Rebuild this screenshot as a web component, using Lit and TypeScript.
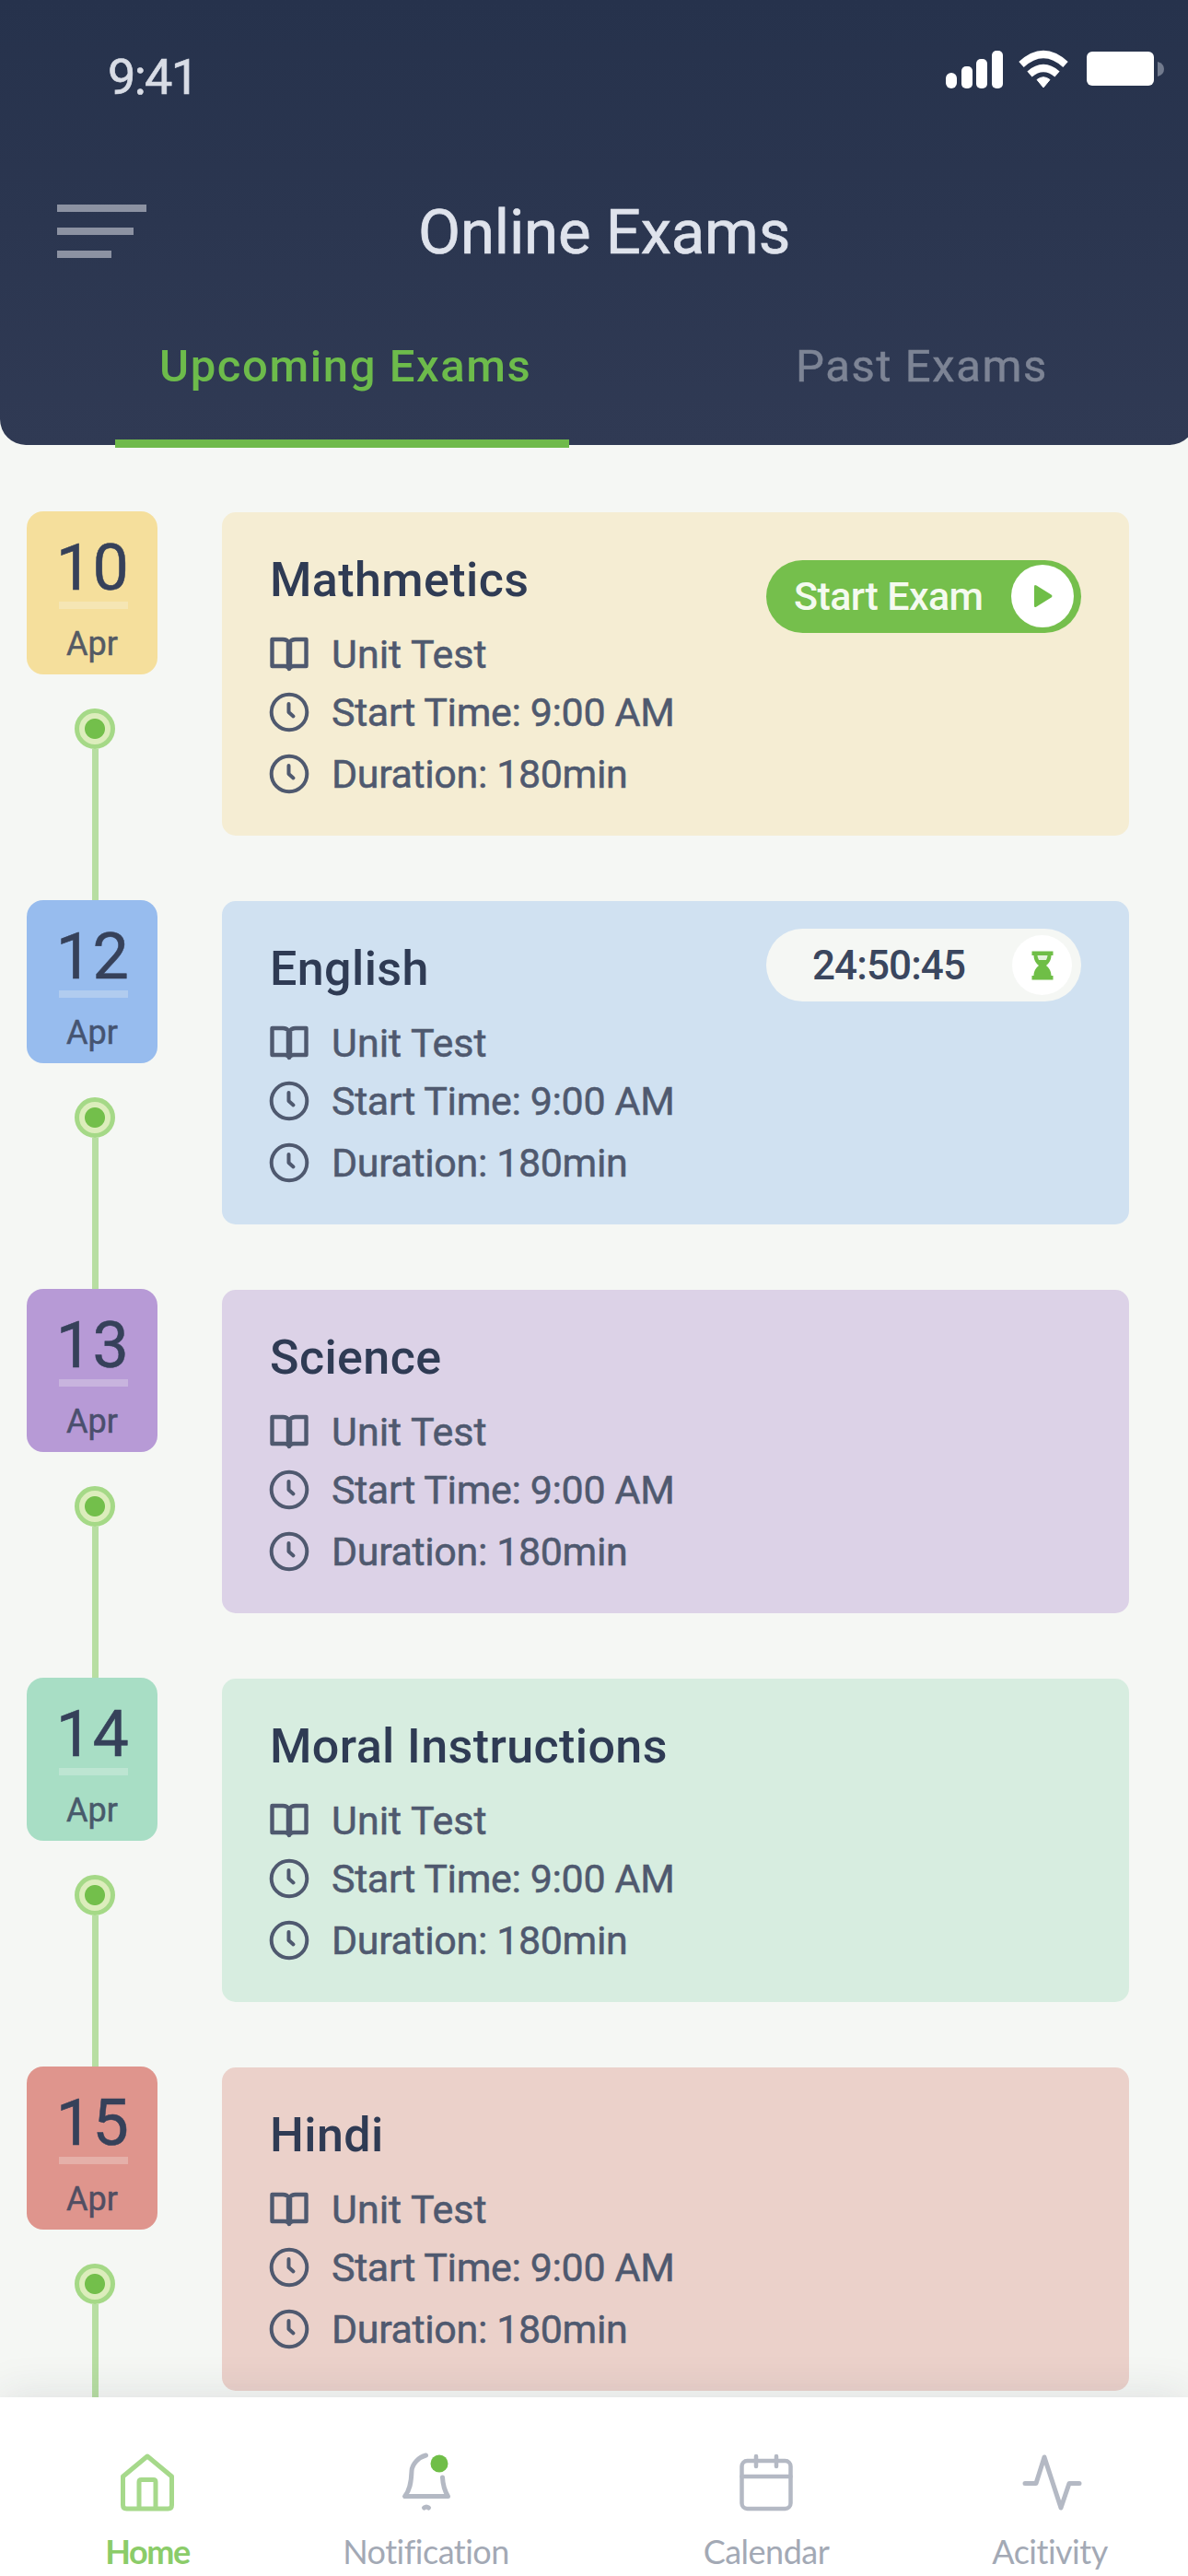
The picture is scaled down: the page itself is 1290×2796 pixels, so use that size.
import { LitElement, html, css, svg, nothing } from "lit";
import { customElement, property } from "lit/decorators.js";

type Action = "start" | "timer" | "none";

interface Exam {
  day: string;
  month: string;
  subject: string;
  tone: string;
  action: Action;
}

const EXAMS: Exam[] = [
  { day: "10", month: "Apr", subject: "Mathmetics", tone: "yellow", action: "start" },
  { day: "12", month: "Apr", subject: "English", tone: "blue", action: "timer" },
  { day: "13", month: "Apr", subject: "Science", tone: "purple", action: "none" },
  { day: "14", month: "Apr", subject: "Moral Instructions", tone: "green", action: "none" },
  { day: "15", month: "Apr", subject: "Hindi", tone: "red", action: "none" },
];

const bookIcon = html`<svg class="icon" width="44" height="40" viewBox="0 0 44 40" fill="none" stroke="currentColor" stroke-width="4.4" stroke-linejoin="round">
  ${svg`<path d="M22 8C20.500 5 18 4 15 4H3.500v29H17c2.600 0 4.300 .8 5 3c.7-2.200 2.400-3 5-3h13.500V4H29c-3 0-5.500 1-7 4z"/><path d="M22 8v28" stroke-width="6.500"/>`}
</svg>`;

const clockIcon = html`<svg class="icon" width="44" height="44" viewBox="0 0 44 44" fill="none" stroke="currentColor" stroke-width="4" stroke-linecap="round" stroke-linejoin="round">
  ${svg`<circle cx="22" cy="22" r="19.300"/><path d="M21.500 13V22l5 4.500"/>`}
</svg>`;

@customElement("exam-row")
class ExamRow extends LitElement {
  @property({ attribute: false }) exam!: Exam;

  static styles = css`
    :host { display: block; height: 422px; flex: none; }
    .row { display: grid; grid-template-columns: 142px 985px; column-gap: 70px; padding-left: 29px; height: 100%; }
    .rail { display: flex; flex-direction: column; align-items: center; }
    .badge { flex: none; width: 142px; height: 177px; margin-top: -1px; border-radius: 18px; display: flex; flex-direction: column; align-items: center; color: #36415a; }
    .day { font-size: 70px; line-height: 74px; letter-spacing: 0.500px; margin: 24px 0 0 1px; -webkit-text-stroke: 0.500px currentColor; }
    .rule { width: 75px; height: 8px; margin: 0 0 0 2px; background: rgba(245, 247, 244, 0.28); }
    .month { font-size: 36px; line-height: 42px; margin-top: 17px; opacity: 0.84; -webkit-text-stroke: 0.500px currentColor; }
    .dot { flex: none; box-sizing: border-box; width: 44px; height: 44px; margin: 37px 0 0 6px; border-radius: 50%; border: 5px solid #a5d987; background: radial-gradient(circle, #73bf4b 10.500px, #dcedbc 11.500px); }
    .line { flex: 1; width: 7px; margin-left: 6px; background: #b7dea2; }
    .card { height: 351px; border-radius: 15px; box-sizing: border-box; padding: 44px 52px 0; display: flex; justify-content: space-between; align-items: flex-start; color: #2f3b54; }
    .subject { font-size: 52px; line-height: 60px; font-weight: 500; margin-bottom: 18px; letter-spacing: 0.400px; white-space: nowrap; }
    .detail { display: flex; align-items: center; height: 63px; font-size: 43px; color: #4f596f; gap: 24px; white-space: nowrap; }
    .detail span { -webkit-text-stroke: 0.500px currentColor; }
    .detail.tight { letter-spacing: -0.370px; }
    .detail.last { height: 72px; }
    .icon { flex: none; display: block; margin-left: -1px; }
    .yellow .badge { background: #f5df9c; } .yellow .card { background: #f5edd3; }
    .blue .badge { background: #97bcee; } .blue .card { background: #d0e1f1; }
    .purple .badge { background: #b79ad6; } .purple .card { background: #dcd2e7; }
    .green .badge { background: #a8dec5; } .green .card { background: #d7ede0; }
    .red .badge { background: #df958d; } .red .card { background: #ebd1ca; }
    .pill { flex: none; box-sizing: border-box; width: 342px; height: 79px; border-radius: 40px; display: flex; align-items: center; justify-content: space-between; font-weight: 500; }
    .start { margin-top: 8px; background: #75bf4c; color: #f4faef; font-size: 43px; padding: 0 8px 1px 30px; letter-spacing: -0.600px; }
    .timer { margin-top: -14px; background: #f5f7f4; color: #3a465e; font-size: 44px; padding: 0 10px 0 50px; letter-spacing: -0.900px; }
    .knob { width: 68px; height: 68px; border-radius: 50%; background: #fff; display: grid; place-items: center; }
    .timer .knob { width: 65px; height: 65px; }
  `;

  private renderAction() {
    if (this.exam.action === "start") {
      return html`<div class="pill start"><span>Start Exam</span>
        <span class="knob"><svg width="24" height="26" viewBox="0 0 24 26" fill="#6fbe47">${svg`<path d="M3 2.500Q3 0 5.500 1.400L21.500 11.500Q23.500 13 21.500 14.500L5.500 24.600Q3 26 3 23.500Z"/>`}</svg></span></div>`;
    }
    if (this.exam.action === "timer") {
      return html`<div class="pill timer"><span>24:50:45</span>
        <span class="knob"><svg width="24" height="32" viewBox="0 0 24 32">${svg`<path fill="#6fbe47" d="M0.500 0.500h23v4.500h-2c0 5-2.500 8.500-5.500 11c3 2.500 5.500 6 5.500 11h2v4.500H0.500V27h2c0-5 2.500-8.500 5.500-11C5 13.500 2.500 10 2.500 5h-2z"/><path fill="#e4f3db" d="M6.500 5h11c-.2 2-.8 3.500-1.500 5H8c-.7-1.500-1.300-3-1.500-5z"/>`}</svg></span></div>`;
    }
    return nothing;
  }

  render() {
    const e = this.exam;
    return html`<div class="row ${e.tone}">
      <div class="rail">
        <div class="badge">
          <span class="day">${e.day}</span>
          <span class="rule"></span>
          <span class="month">${e.month}</span>
        </div>
        <span class="dot"></span>
        <span class="line"></span>
      </div>
      <div class="card">
        <div>
          <div class="subject">${e.subject}</div>
          <div class="detail">${bookIcon}<span>Unit Test</span></div>
          <div class="detail tight">${clockIcon}<span>Start Time: 9:00 AM</span></div>
          <div class="detail tight last">${clockIcon}<span>Duration: 180min</span></div>
        </div>
        ${this.renderAction()}
      </div>
    </div>`;
  }
}

@customElement("app-root")
class AppRoot extends LitElement {
  static styles = css`
    :host { display: block; font-family: Roboto, "Liberation Sans", sans-serif; }
    .screen { width: 1290px; height: 2796px; overflow: hidden; display: flex; flex-direction: column; background: #f5f7f4; }
    header { flex: none; height: 483px; box-sizing: border-box; margin-right: -8px; border-radius: 0 0 28px 28px; background: linear-gradient(#26324c, #303a54); display: flex; flex-direction: column; position: relative; z-index: 1; }
    .status { flex: none; display: flex; justify-content: space-between; align-items: flex-start; height: 150px; box-sizing: border-box; padding: 52px 29px 0 117px; }
    .time { font-size: 54px; line-height: 64px; letter-spacing: -1.700px; color: #d8dce5; -webkit-text-stroke: 0.700px currentColor; }
    .title-row { flex: none; display: flex; height: 196px; }
    .menu { flex: none; width: 98px; height: 58px; margin: 72px 0 0 62px; display: flex; flex-direction: column; justify-content: space-between; }
    .menu span { height: 8px; background: #8c92a2; }
    .menu .a { width: 97px; } .menu .b { width: 83px; } .menu .c { width: 59px; }
    h1 { margin: 62px 0 0 294px; font-weight: 400; font-size: 67px; line-height: 80px; letter-spacing: -0.150px; color: #dfe3ec; white-space: nowrap; -webkit-text-stroke: 0.700px currentColor; }
    .tabs { flex: none; display: grid; grid-template-columns: 493px 1fr; column-gap: 85px; padding: 0 0 0 125px; height: 140px; }
    .tab { display: flex; flex-direction: column; justify-content: space-between; font-size: 49px; line-height: 60px; white-space: nowrap; padding-top: 22px; box-sizing: border-box; }
    .tab.active { color: #6dbb4b; font-weight: 500; }
    .tab .label { padding-left: 48px; letter-spacing: 1.600px; }
    .tab.past { color: #7d8495; justify-content: flex-start; -webkit-text-stroke: 0.500px currentColor; }
    .tab.past .label { padding-left: 161px; }
    .bar { height: 9px; background: #6fba4b; }
    main { flex: 1; min-height: 0; overflow: hidden; padding-top: 73px; display: flex; flex-direction: column; }
    nav { flex: none; height: 194px; box-sizing: border-box; position: relative; background: #fff; box-shadow: 0 0 46px rgba(39, 51, 77, 0.12); display: grid; grid-template-columns: 320px 285px 454px 162px; }
    .item { display: flex; flex-direction: column; align-items: center; padding-top: 58px; font: 400 36px/44px Lato, "Liberation Sans", sans-serif; letter-spacing: -0.500px; color: #a3a9b5; }
    .item svg { display: block; margin-bottom: 17px; }
    .item.on { color: #8bcc69; font-weight: 700; letter-spacing: -1.400px; }
  `;

  render() {
    return html`<div class="screen">
      <header>
        <div class="status">
          <span class="time">9:41</span>
          <svg width="242" height="48" viewBox="0 0 242 48">${svg`
            <g fill="#fff">
              <rect x="0" y="27" width="12" height="17" rx="6"/>
              <rect x="17" y="20" width="12" height="24" rx="5"/>
              <rect x="33" y="12" width="12" height="32" rx="5"/>
              <rect x="50" y="3" width="12" height="41" rx="5"/>
              <rect x="153" y="4" width="73" height="37" rx="6"/>
              <path d="M106 43l-7-8.500q7-5.500 14 0z" stroke="#fff" stroke-width="1" stroke-linejoin="round"/>
            </g>
            <g fill="none" stroke="#fff" stroke-width="8">
              <path d="M82 18q24-22 48 0"/>
              <path d="M91 28.500q15-13 30 0"/>
            </g>
            <path d="M230 15q7 2 7 8t-7 8z" fill="#727b8e"/>`}</svg>
        </div>
        <div class="title-row">
          <div class="menu"><span class="a"></span><span class="b"></span><span class="c"></span></div>
          <h1>Online Exams</h1>
        </div>
        <div class="tabs">
          <div class="tab active"><span class="label">Upcoming Exams</span><span class="bar"></span></div>
          <div class="tab past"><span class="label">Past Exams</span></div>
        </div>
      </header>
      <main>${EXAMS.map((e) => html`<exam-row .exam=${e}></exam-row>`)}</main>
      <nav>
        <div class="item on">
          <svg width="70" height="70" viewBox="0 0 70 70" fill="none" stroke="#a6d98b" stroke-width="5" stroke-linejoin="round">${svg`
            <path d="M8.500 28L35 6l26.500 22v31q0 4-4 4h-45q-4 0-4-4z"/><path d="M26 63V34q0-2.500 2.500-2.500h13q2.500 0 2.500 2.500v29"/>`}</svg>
          <span>Home</span>
        </div>
        <div class="item">
          <svg width="70" height="70" viewBox="0 0 70 70" fill="none" stroke="#b4b9c4" stroke-width="5" stroke-linejoin="round" stroke-linecap="round">${svg`
            <path d="M34.500 5C27 7 19.500 14 19 22C18.500 35 17 43 11.500 49.500H58.500C55 44 53 38 52.500 29"/><path d="M32.500 62q2.500-2 5 0"/>
            <circle cx="49" cy="14" r="9.500" fill="#70be48" stroke="none"/>`}</svg>
          <span>Notification</span>
        </div>
        <div class="item">
          <svg width="70" height="70" viewBox="0 0 70 70" fill="none" stroke="#b4b9c4" stroke-width="4.500" stroke-linecap="round">${svg`
            <rect x="8.500" y="11" width="53" height="52" rx="6"/><path d="M8.500 28h53M24 6v11M46 6v11"/>`}</svg>
          <span>Calendar</span>
        </div>
        <div class="item">
          <svg width="70" height="70" viewBox="0 0 70 70" fill="none" stroke="#b4b9c4" stroke-width="5" stroke-linejoin="round" stroke-linecap="round">${svg`
            <path d="M8 35.500h12L29 7l18 55l9-26.500h11"/>`}</svg>
          <span>Acitivity</span>
        </div>
      </nav>
    </div>`;
  }
}
